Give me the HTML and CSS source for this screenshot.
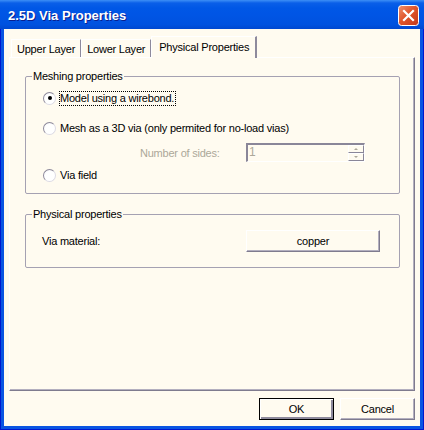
FILE: index.html
```html
<!DOCTYPE html>
<html>
<head>
<meta charset="utf-8">
<title>2.5D Via Properties</title>
<link rel="stylesheet" href="styles.css">
</head>
<body>
<div class="window">
  <div class="titlebar">
    <span class="title">2.5D Via Properties</span>
    <span class="close">
      <svg width="21" height="21" viewBox="0 0 21 21">
        <defs>
          <linearGradient id="cg" x1="0" y1="0" x2="1" y2="1">
            <stop offset="0" stop-color="#f0926f"/>
            <stop offset="0.45" stop-color="#e0562c"/>
            <stop offset="1" stop-color="#c2381a"/>
          </linearGradient>
        </defs>
        <rect x="0.5" y="0.5" width="20" height="20" rx="3" fill="url(#cg)" stroke="#ffffff"/>
        <path d="M6 6 L15 15 M15 6 L6 15" stroke="#ffffff" stroke-width="2.2" stroke-linecap="square"/>
      </svg>
    </span>
  </div>
  <div class="client">
    <div class="tabs">
      <div class="tab">Upper Layer</div>
      <div class="tab">Lower Layer</div>
      <div class="tab active">Physical Properties</div>
    </div>
    <div class="page">
      <div class="group mesh">
        <div class="group-title">Meshing properties</div>
        <div class="radio-row first">
          <span class="radio checked"></span>
          <span class="label focus">Model using a wirebond.</span>
        </div>
        <div class="radio-row second">
          <span class="radio"></span>
          <span class="label">Mesh as a 3D via (only permited for no-load vias)</span>
        </div>
        <div class="spin-row">
          <span class="spin-label">Number of sides:</span>
          <div class="spin">
            <span class="spin-value">1</span>
            <div class="spin-btns">
              <span class="spin-btn"><span class="arrow up"></span></span>
              <span class="spin-btn"><span class="arrow down"></span></span>
            </div>
          </div>
        </div>
        <div class="radio-row third">
          <span class="radio"></span>
          <span class="label">Via field</span>
        </div>
      </div>
      <div class="group phys">
        <div class="group-title">Physical properties</div>
        <div class="field-row">
          <span class="field-label">Via material:</span>
          <button class="btn material">copper</button>
        </div>
      </div>
    </div>
    <div class="actions">
      <button class="btn default">OK</button>
      <button class="btn">Cancel</button>
    </div>
  </div>
</div>
</body>
</html>
```
FILE: styles.css
```css
* { box-sizing: border-box; }

body {
  margin: 0;
  font-family: "Liberation Sans", Arial, sans-serif;
  font-size: 11px;
  letter-spacing: -0.22px;
  color: #000;
}

.window {
  width: 424px;
  height: 430px;
  display: flex;
  flex-direction: column;
  background: #0a55e2;
  box-shadow: inset 1px 0 #0019cf, inset -1px 0 #0019cf, inset 0 -1px #0019cf;
}

.titlebar {
  height: 29px;
  flex: none;
  display: flex;
  align-items: center;
  justify-content: space-between;
  padding: 2px 5px 0 8px;
  background: linear-gradient(to bottom, #3d8ff6 0, #0a5fe8 3px, #0057e6 8px, #0055e5 50%, #0052df 85%, #0048d0 100%);
}

.title {
  color: #fff;
  font-weight: bold;
  font-size: 13px;
  letter-spacing: 0;
  text-shadow: 1px 1px #0a1f8f;
}

.close {
  width: 21px;
  height: 21px;
  display: block;
}
.close svg { display: block; }

.client {
  flex: 1;
  margin: 0 4px 4px;
  background: #fffbf0;
  padding: 0 5px 6px;
  display: flex;
  flex-direction: column;
}

.tabs {
  height: 28px;
  flex: none;
  display: flex;
  align-items: flex-end;
  padding-left: 2px;
  position: relative;
  z-index: 1;
}

.tab {
  height: 18px;
  padding: 0 5px;
  display: flex;
  align-items: center;
  border-left: 1px solid #ffffff;
  border-top: 1px solid #ffffff;
  border-right: 1px solid #8e8a9c;
  background: #fffbf0;
  white-space: nowrap;
}

.tab.active {
  height: 22px;
  margin-bottom: -1px;
  margin-left: 0;
  padding: 0 6px 2px 7px;
  border-right: 2px solid #8e8a9c;
}

.page {
  height: 334px;
  flex: none;
  border-top: 1px solid #ffffff;
  border-left: 1px solid #ffffff;
  border-right: 1px solid #7f7b8e;
  border-bottom: 1px solid #7f7b8e;
  box-shadow: inset -1px -1px #b3afbf;
  padding: 0 14px 0 15px;
}

.group {
  border: 1px solid #a5a1b2;
  border-radius: 2px;
}
.group.mesh { margin-top: 18px; padding-bottom: 9px; }
.group.phys { margin-top: 20px; padding-bottom: 15px; }

.group-title {
  display: table;
  margin: -8px 0 0 6px;
  padding: 0 1px;
  line-height: 14px;
  background: #fffbf0;
}

.radio-row {
  height: 18px;
  display: flex;
  align-items: center;
  padding-left: 17px;
}
.radio-row.first { margin-top: 6px; }
.radio-row.second { margin-top: 12px; }
.radio-row.third { margin-top: 4px; }

.radio {
  width: 13px;
  height: 13px;
  border-radius: 50%;
  border: 1px solid;
  border-color: #8d899b #dcdae4 #dcdae4 #8d899b;
  background: radial-gradient(circle at 60% 60%, #ffffff 0, #ffffff 55%, #eeeef2 100%);
  display: flex;
  align-items: center;
  justify-content: center;
  flex: none;
}
.radio.checked::after {
  content: "";
  width: 4px;
  height: 4px;
  border-radius: 50%;
  background: #000;
}

.label {
  margin-left: 3px;
  line-height: 13px;
  border: 1px solid transparent;
  padding: 0 1px 0 0;
  white-space: nowrap;
}
.label.focus { border: 1px dotted #000; }

.spin-row {
  margin-top: 6px;
  height: 19px;
  display: flex;
  align-items: center;
  padding-left: 114px;
}
.spin-label {
  width: 106px;
  color: #aca899;
}
.spin {
  width: 119px;
  height: 19px;
  display: flex;
  border-style: solid;
  border-width: 2px 1px 1px 2px;
  border-color: #8a8698 #ffffff #ffffff #8a8698;
  background: #fffbf0;
}
.spin-value {
  flex: 1;
  color: #aca899;
  padding-left: 1px;
  line-height: 15px;
  font-size: 12px;
}
.spin-btns {
  width: 16px;
  display: flex;
  flex-direction: column;
}
.spin-btn {
  flex: 1;
  display: flex;
  align-items: center;
  justify-content: center;
  border-top: 1px solid #ffffff;
  border-left: 1px solid #ffffff;
  border-right: 1px solid #8a8698;
  border-bottom: 1px solid #8a8698;
}
.arrow {
  width: 0;
  height: 0;
  border-left: 2px solid transparent;
  border-right: 2px solid transparent;
}
.arrow.up { border-bottom: 2px solid #aca899; }
.arrow.down { border-top: 2px solid #aca899; }

.field-row {
  margin-top: 9px;
  height: 22px;
  display: flex;
  align-items: center;
  padding-left: 16px;
}
.field-label { width: 204px; }

.btn {
  font-family: inherit;
  font-size: 11px;
  letter-spacing: -0.22px;
  color: #000;
  background: #fffbf0;
  height: 22px;
  padding: 0;
  border-style: solid;
  border-width: 1px;
  border-color: #ffffff #7f7b8e #7f7b8e #ffffff;
  box-shadow: inset -1px -1px #b3afbf;
}
.btn.material { width: 134px; }

.actions {
  margin-top: 7px;
  display: flex;
  justify-content: flex-end;
  gap: 6px;
}
.actions .btn { width: 75px; }
.btn.default {
  border: 1px solid #000;
  box-shadow: inset 1px 1px #ffffff, inset -2px -2px #8e8a9c;
}
```
